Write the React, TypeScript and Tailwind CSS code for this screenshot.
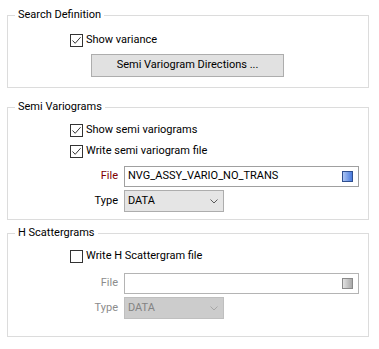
import React from "react";

const font = "font-['Roboto','Liberation_Sans',sans-serif] text-[11px]";

function Group({ title, className, children }: { title: string; className: string; children: React.ReactNode }) {
  return (
    <div className={`relative border border-[#dcdcdc] ${className}`}>
      <span className="absolute -top-[9px] left-[7px] bg-white px-[3px] leading-[16px] text-black">{title}</span>
      {children}
    </div>
  );
}

function Check({ checked, label, className = "" }: { checked: boolean; label: string; className?: string }) {
  return (
    <div className={`flex h-[17px] items-center ${className}`}>
      <span className="flex h-[13px] w-[13px] items-center justify-center border border-[#333333] bg-white">
        {checked && (
          <svg width="11" height="11" viewBox="0 0 11 11">
            <path d="M1.5 5.5 L4.2 8.3 L9.6 2.2" fill="none" stroke="#333333" strokeWidth="1" />
          </svg>
        )}
      </span>
      <span className="ml-[3px] text-black">{label}</span>
    </div>
  );
}

function Chevron({ color }: { color: string }) {
  return (
    <svg width="8" height="5" viewBox="0 0 8 5">
      <path d="M0.5 0.5 L4 4 L7.5 0.5" fill="none" stroke={color} strokeWidth="1" />
    </svg>
  );
}

function FileRow({ value, disabled, className = "" }: { value: string; disabled?: boolean; className?: string }) {
  return (
    <div className={`flex items-center ${className}`}>
      <span className={`w-[110px] text-right ${disabled ? "text-[#8c8c8c]" : "text-[#800000]"}`}>File</span>
      <div
        className={`ml-[6px] flex h-[21px] w-[235px] items-center justify-between border bg-white pl-[3px] pr-[5px] ${
          disabled ? "border-[#b4b4b4]" : "border-[#a0a0a0]"
        }`}
      >
        <span className="text-black">{value}</span>
        {disabled ? (
          <span className="h-[11px] w-[11px] border border-[#8a8a8a] bg-gradient-to-r from-[#e2e2e2] to-[#a9a9a9]" />
        ) : (
          <span className="h-[11px] w-[11px] border border-[#2f4f8f] bg-gradient-to-r from-[#adc5f3] to-[#4a7adc]" />
        )}
      </div>
    </div>
  );
}

function TypeRow({ disabled, className = "" }: { disabled?: boolean; className?: string }) {
  return (
    <div className={`flex items-center ${className}`}>
      <span className={`w-[110px] text-right ${disabled ? "text-[#8c8c8c]" : "text-black"}`}>Type</span>
      <div
        className={`ml-[6px] flex h-[22px] w-[100px] items-center justify-between border pl-[3px] pr-[5px] ${
          disabled ? "border-[#bfbfbf] bg-[#cccccc] text-[#838383]" : "border-[#adadad] bg-[#e5e5e5] text-black"
        }`}
      >
        <span>DATA</span>
        <Chevron color={disabled ? "#a6a6a6" : "#5a5a5a"} />
      </div>
    </div>
  );
}

export default function App() {
  return (
    <div className={`h-[349px] w-[379px] bg-white pl-[7px] pt-[15px] ${font}`}>
      <div className="w-[362px]">
        <Group title="Search Definition" className="pb-[10px] pt-[16px]">
          <Check checked label="Show variance" className="ml-[62px]" />
          <button className="ml-[83px] mt-[5px] flex h-[23px] w-[193px] items-center justify-center border border-[#adadad] bg-[#e1e1e1] text-black">
            Semi Variogram Directions ...
          </button>
        </Group>

        <Group title="Semi Variograms" className="mt-[19px] pb-[7px] pt-[14px]">
          <Check checked label="Show semi variograms" className="ml-[62px]" />
          <Check checked label="Write semi variogram file" className="ml-[62px] mt-[4px]" />
          <FileRow value="NVG_ASSY_VARIO_NO_TRANS" className="mt-[6px]" />
          <TypeRow className="mt-[3px]" />
        </Group>

        <Group title="H Scattergrams" className="mt-[13px] pb-[17px] pt-[14px]">
          <Check checked={false} label="Write H Scattergram file" className="ml-[62px]" />
          <FileRow value="" disabled className="mt-[8px]" />
          <TypeRow disabled className="mt-[3px]" />
        </Group>
      </div>
    </div>
  );
}
